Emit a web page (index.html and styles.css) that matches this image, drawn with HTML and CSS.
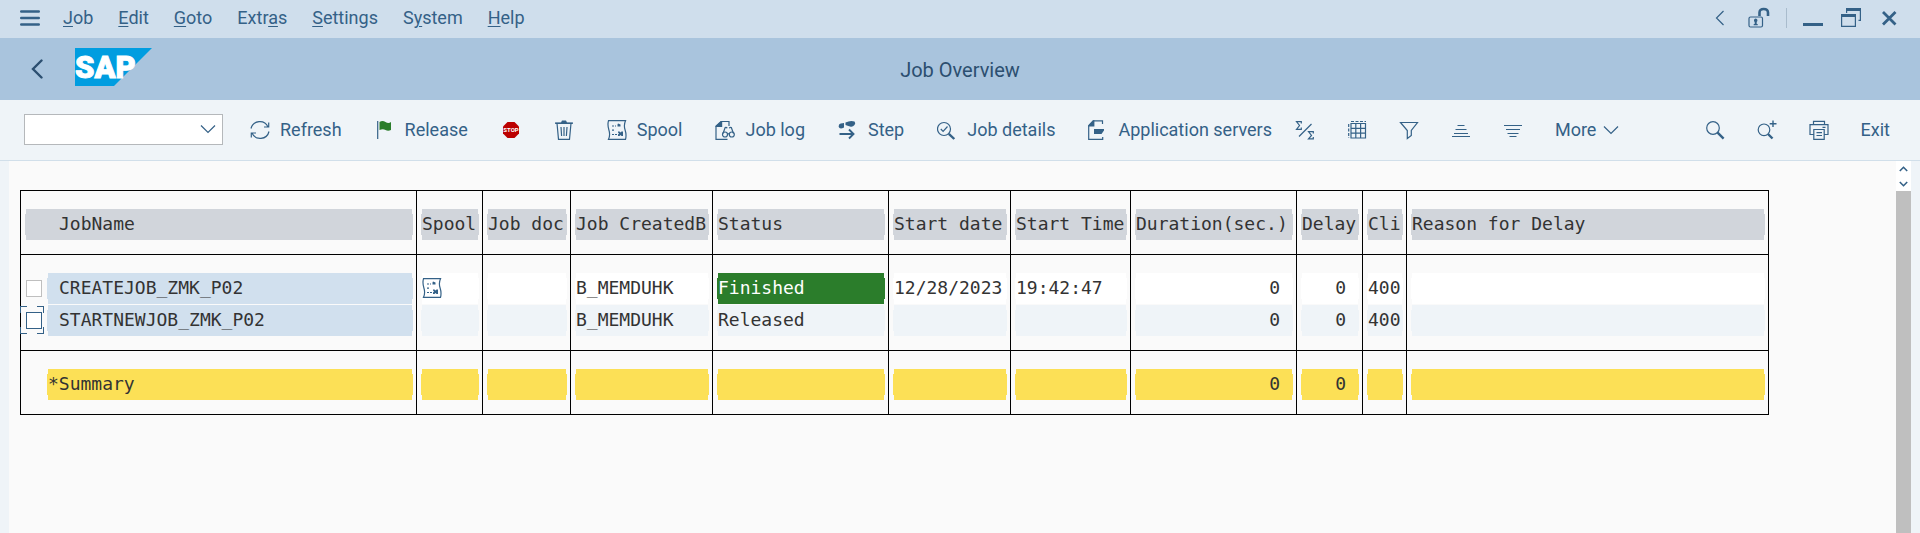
FILE: index.html
```html
<!DOCTYPE html>
<html lang="en">
<head>
<meta charset="utf-8">
<meta name="viewport" content="width=device-width, initial-scale=1">
<title>Job Overview</title>
<link rel="stylesheet" href="styles.css">
</head>
<body>
<svg class="defs" width="0" height="0" aria-hidden="true">
  <symbol id="spool" viewBox="0 0 20 20">
    <path class="line" d="M1.5.7h17q-2 4.5-.4 9.3t.4 9.3h-17q2-4.500.4-9.300T1.500.7z"/>
    <path class="line" stroke-dasharray="2 1" d="M5 6h4M5 14.500h5M5 10.200h2"/>
    <path class="fill" d="M11 3.500l2.500 1v2h-3v-2zM11 11.500h1.500l1 1 1-1H16v4.500h-1.500l-1-1-1 1H11v-1.500l1-1-1-1z"/>
  </symbol>
</svg>

<nav class="menubar" aria-label="Menu">
  <button class="plain" aria-label="Menu"><svg width="20" height="20" viewBox="0 0 20 20"><path d="M1.200 3.500h17.600M1.200 10h17.600M1.200 16.500h17.600" fill="none" stroke="currentColor" stroke-width="2.400" stroke-linecap="round"/></svg></button>
  <div class="menus">
    <a href="#"><u>J</u>ob</a><a href="#"><u>E</u>dit</a><a href="#"><u>G</u>oto</a><a href="#">Extr<u>a</u>s</a><a href="#"><u>S</u>ettings</a><a href="#">S<u>y</u>stem</a><a href="#"><u>H</u>elp</a>
  </div>
  <div class="window-tools">
    <button class="plain" aria-label="Previous"><svg width="10" height="20" viewBox="0 0 10 20"><path class="line" d="M8.500 3 1.500 10l7 7"/></svg></button>
    <button class="plain lock" aria-label="Unlock"><svg width="22" height="22" viewBox="0 0 22 22"><rect class="line" x="1" y="10" width="13.500" height="10" rx="1.500"/><path d="M11.500 9V5.500q0-3.500 4.200-3.500T20 5.500V9" fill="none" stroke="currentColor" stroke-width="2.600"/><path class="fill" d="M7.700 11.500a1.900 1.900 0 0 1 1 3.400V17h1v1.300h-4V17h1v-2.100a1.900 1.900 0 0 1 1-3.400z"/></svg></button>
    <span class="divider"></span>
    <button class="plain" aria-label="Minimize"><svg width="20" height="20" viewBox="0 0 20 20"><path class="fill" d="M0 15h20v3H0z"/></svg></button>
    <button class="plain" aria-label="Restore"><svg width="20" height="20" viewBox="0 0 20 20"><path class="fill" d="M5 0h15v13h-2.500v-1.200h1.300V3H6.200v2H5zM0 6h15v13H0zm1.200 3v8.800h12.600V9z" fill-rule="evenodd"/></svg></button>
    <button class="plain" aria-label="Close"><svg width="20" height="20" viewBox="0 0 20 20"><path d="M4 4l12.500 12.500M16.500 4 4 16.500" fill="none" stroke="currentColor" stroke-width="2.800"/></svg></button>
  </div>
</nav>

<header class="titlebar">
  <div class="brand">
    <button class="plain" aria-label="Back"><svg width="12" height="20" viewBox="0 0 12 20"><path d="M10.500 1.500 2 10l8.500 8.500" fill="none" stroke="currentColor" stroke-width="2.400" stroke-linecap="round"/></svg></button>
    <svg class="logo" width="77" height="38" viewBox="0 0 77 38" role="img" aria-label="SAP"><path fill="#009de0" d="M0 0h77L39 38H0z"/><text class="logo-text" x="0" y="30">SAP</text></svg>
  </div>
  <h1>Job Overview</h1>
</header>

<div class="toolbar" role="toolbar" aria-label="Job actions">
  <div class="command">
    <select aria-label="Command"><option></option></select>
    <svg width="16" height="10" viewBox="0 0 16 10"><path class="line" d="M1 1.500l7 7 7-7"/></svg>
  </div>
  <div class="actions">
    <button><svg width="20" height="20" viewBox="0 0 20 20"><path class="line" d="M1 8.500A9 9 0 0 1 18 7M14 7h4.700V2.500M19 11.500A9 9 0 0 1 2 13M6 13H1.300v4.500"/></svg>Refresh</button>
    <button><svg width="20" height="20" viewBox="0 0 20 20"><path class="line" d="M2.700 1v18"/><path fill="#2b7d2b" d="M4.500 2q3-2 6 0t5.500 0v8q-3 1.500-5.500 0t-6 0z"/></svg>Release</button>
    <button aria-label="Stop"><svg width="20" height="20" viewBox="0 0 20 20"><path fill="#b00" d="M6.500 2h7L18 6.500v7L13.500 18h-7L2 13.500v-7z"/><text class="stop-text" x="10" y="12">STOP</text></svg></button>
    <button aria-label="Delete"><svg width="20" height="20" viewBox="0 0 20 20"><path class="line" d="M1.500 3.300h17M3 3.300l1.500 16h11l1.500-16M7 7l.6 9M10 7v9M13 7l-.6 9"/><path class="fill" d="M1 2.500h6L8 .5h4l1 2h6v1.300H1z"/></svg></button>
    <button><svg width="20" height="20"><use href="#spool"/></svg>Spool</button>
    <button><svg width="20" height="20" viewBox="0 0 20 20"><path class="line" d="M12.500 19.300H1V6.500L6.500 1.500H14V6"/><path class="fill" d="M.5 7V5.700L5.700.9h1.500V7z"/><path class="line" d="M8 13.500l2.200-6q1.300-.6 2 .8M18.500 13.500l-2.200-6q-1.300-.6-2 .8"/><circle class="line" cx="10" cy="14.500" r="2.500"/><circle class="line" cx="16.800" cy="14.500" r="2.500"/><path class="line" d="M12.500 13.800h1.800"/></svg>Job log</button>
    <button><svg width="20" height="20" viewBox="0 0 20 20"><path class="fill" d="M7.500 2.500q5-2.500 9-1 1.500 1.500 0 3.500-2 2.500-4.500 1.500T7.500 5zM6 3v4.500q-3 1.500-4.500.5T1 4.800Q2 3 6 3z"/><path d="M1.500 14h14M11 9.500l4.500 4.500L11 18.500" fill="none" stroke="currentColor" stroke-width="1.900"/></svg>Step</button>
    <button><svg width="20" height="20" viewBox="0 0 20 20"><circle class="line" cx="7" cy="9" r="6.500"/><path class="line" d="M3.800 9l2.300 2.300L10.500 6.500"/><path d="M11.800 13.800l5.500 5.200" stroke="currentColor" stroke-width="2.400"/></svg>Job details</button>
    <button><svg width="20" height="20" viewBox="0 0 20 20"><path class="line" d="M14.500 4V.8H5.500L.7 6v13.300h14V17"/><path class="fill" d="M.2 6.500V5.300L4.900.3h1.500v6.200zM6 9h10v1.500L13.500 14H6z"/></svg>Application servers</button>
  </div>
  <div class="view-actions">
    <button aria-label="Subtotal"><svg width="20" height="20" viewBox="0 0 20 20"><path class="line" d="M6.300 3.500V1.600H1.500L4.500 5.500l-3 3.900h4.800V7.500M18.300 13.500v-1.900h-4.800l3 3.900-3 3.400h4.800V17M16.500 4 4 16.500"/></svg></button>
    <button aria-label="Layout"><svg width="20" height="20" viewBox="0 0 20 20"><path class="line" d="M4 3.500h14.500v14.500H4zM4 8.300h14.500M4 13.100h14.500M8.800 3.500V18M13.600 3.500V18"/><path class="line" stroke-dasharray="3 1.500" d="M4 1.500h15M1.700 4v14"/></svg></button>
    <button aria-label="Filter"><svg width="20" height="20" viewBox="0 0 20 20"><path class="line" d="M1.500 2.500h17l-6.200 8v5l-4 3v-8z"/></svg></button>
    <button aria-label="Sort ascending"><svg width="20" height="20" viewBox="0 0 20 20"><path class="line" d="M6.500 5.500h7M4.500 9.500h11M3 13.500h14M1 16.500h18"/></svg></button>
    <button aria-label="Sort descending"><svg width="20" height="20" viewBox="0 0 20 20"><path class="line" d="M1 5.500h18M3 9.500h14M4.500 13.500h11M6.500 16.500h7"/></svg></button>
    <button class="more">More<svg width="16" height="10" viewBox="0 0 16 10"><path class="line" d="M1 1.500l7 7 7-7"/></svg></button>
  </div>
  <div class="toolbar-end">
    <button aria-label="Find"><svg width="20" height="20" viewBox="0 0 20 20"><circle class="line" cx="8" cy="8" r="6.300"/><path d="M12.600 12.600l6 6" stroke="currentColor" stroke-width="2.400"/></svg></button>
    <button aria-label="Find next"><svg width="20" height="20" viewBox="0 0 20 20"><circle class="line" cx="7" cy="9.800" r="5.800"/><path d="M11 14l4.500 4.500" stroke="currentColor" stroke-width="2.400"/><path d="M16 .5v6.500M12.700 3.800h6.800" stroke="currentColor" stroke-width="1.400"/></svg></button>
    <button aria-label="Print"><svg width="20" height="20" viewBox="0 0 20 20"><path class="line" d="M4.500 4.500V1.300h11v3.200M4.500 14.500H1V4.700h18v9.800h-3.500M4.800 9.500h10.400v9.800H4.800zM7.500 12.700h5.500M7.500 15.500h5.500M13.500 7.300h3"/></svg></button>
    <button>Exit</button>
  </div>
</div>

<main class="workspace">
  <div class="list-area">
    <table>
      <colgroup><col class="w-name"><col class="w-short"><col class="w-doc"><col class="w-creator"><col class="w-status"><col class="w-date"><col class="w-time"><col class="w-duration"><col class="w-short"><col class="w-client"><col class="w-reason"></colgroup>
      <thead>
        <tr><th><span class="field indent">JobName</span></th><th><span class="field">Spool</span></th><th><span class="field">Job doc</span></th><th><span class="field">Job CreatedB</span></th><th><span class="field">Status</span></th><th><span class="field">Start date</span></th><th><span class="field">Start Time</span></th><th><span class="field">Duration(sec.)</span></th><th><span class="field">Delay</span></th><th><span class="field">Cli</span></th><th><span class="field">Reason for Delay</span></th></tr>
      </thead>
      <tbody class="jobs">
        <tr class="job">
          <td><label class="pick"><span class="tick"><input type="checkbox"></span><span class="field key">CREATEJOB_ZMK_P02</span></label></td>
          <td><span class="field"><svg width="20" height="20" role="img" aria-label="Spool list"><use href="#spool"/></svg></span></td>
          <td><span class="field"></span></td><td><span class="field">B_MEMDUHK</span></td><td><span class="field finished">Finished</span></td><td><span class="field">12/28/2023</span></td><td><span class="field">19:42:47</span></td><td><span class="field num">0</span></td><td><span class="field num">0</span></td><td><span class="field">400</span></td><td><span class="field"></span></td>
        </tr>
        <tr class="job alt">
          <td><label class="pick"><span class="tick focused"><input type="checkbox"></span><span class="field key">STARTNEWJOB_ZMK_P02</span></label></td>
          <td><span class="field"></span></td><td><span class="field"></span></td><td><span class="field">B_MEMDUHK</span></td><td><span class="field">Released</span></td><td><span class="field"></span></td><td><span class="field"></span></td><td><span class="field num">0</span></td><td><span class="field num">0</span></td><td><span class="field">400</span></td><td><span class="field"></span></td>
        </tr>
      </tbody>
      <tfoot>
        <tr><td><div class="pick"><span class="tick"></span><span class="field">*Summary</span></div></td><td><span class="field"></span></td><td><span class="field"></span></td><td><span class="field"></span></td><td><span class="field"></span></td><td><span class="field"></span></td><td><span class="field"></span></td><td><span class="field num">0</span></td><td><span class="field num">0</span></td><td><span class="field"></span></td><td><span class="field"></span></td></tr>
      </tfoot>
    </table>
  </div>
  <div class="scrollbar">
    <button class="plain" aria-label="Scroll up"><svg width="9" height="6" viewBox="0 0 9 6"><path d="M.8 5l3.700-3.700L8.200 5" fill="none" stroke="currentColor" stroke-width="1.600"/></svg></button>
    <button class="plain" aria-label="Scroll down"><svg width="9" height="6" viewBox="0 0 9 6"><path d="M.8 1l3.700 3.700L8.200 1" fill="none" stroke="currentColor" stroke-width="1.600"/></svg></button>
    <div class="thumb"></div>
  </div>
</main>
</body>
</html>
```
FILE: styles.css
```css
* { box-sizing: border-box; }

body {
  margin: 0;
  min-height: 100vh;
  display: flex;
  flex-direction: column;
  background: #eff4f8;
  color: #346187;
  font: 18px/24px Roboto, "Liberation Sans", sans-serif;
}

.defs { position: absolute; }
svg { flex: none; display: block; }
.line { fill: none; stroke: currentColor; stroke-width: 1.2; }
.fill { fill: currentColor; }

button {
  display: flex;
  align-items: center;
  gap: 10px;
  padding: 0;
  border: 0;
  background: none;
  color: inherit;
  font: inherit;
  white-space: nowrap;
}

.menubar {
  display: flex;
  align-items: center;
  height: 38px;
  padding: 0 21px 2px 20px;
  background: #cfdeec;
}
.menus { display: flex; gap: 25px; margin-left: 23px; }
.menus a { color: inherit; text-decoration: none; }
.menus u { text-underline-offset: 2px; text-decoration-thickness: 1px; }

.window-tools { display: flex; align-items: center; gap: 18px; margin-left: auto; }
.window-tools .lock { margin-left: 5px; }
.divider { width: 1px; height: 20px; background: #a9bccd; margin: 0 -2px; }

.titlebar {
  display: grid;
  grid-template-columns: 1fr auto 1fr;
  align-items: center;
  height: 62px;
  padding: 0 31px;
  background: #a9c4dd;
  color: #2c4f70;
}
.brand { display: flex; align-items: center; gap: 32px; }
.logo { margin-bottom: 4px; }
.titlebar h1 { margin: 0; padding-top: 2px; font-size: 20px; font-weight: 400; }
.logo-text { font: 900 31px Roboto, sans-serif; fill: #fff; stroke: #fff; stroke-width: 1; }
.stop-text { font: 700 6px Roboto, sans-serif; fill: #fff; text-anchor: middle; }

.toolbar {
  display: flex;
  align-items: center;
  gap: 27px;
  height: 61px;
  padding: 0 30px 0 24px;
  border-bottom: 1px solid #d1dfea;
}
.command { display: grid; align-items: center; width: 199px; padding-bottom: 2px; }
.command > * { grid-area: 1 / 1; }
.command svg { justify-self: end; margin-right: 7px; pointer-events: none; }
.command select {
  appearance: none;
  width: 100%;
  height: 31px;
  border: 1px solid #b5b8bb;
  background: #fff;
  font: inherit;
}
.actions { display: flex; gap: 33px; }
.view-actions { display: flex; gap: 32px; margin-left: -4px; }
.toolbar .more { gap: 7px; }
.toolbar-end { display: flex; gap: 32px; margin-left: auto; }

.workspace { flex: 1; display: flex; padding: 0 9px; }
.list-area { flex: 1; padding: 29px 0 29px 11px; background: #fafafa; overflow: hidden; }
.scrollbar { display: flex; flex-direction: column; width: 15px; background: #fff; }
.scrollbar button { justify-content: center; height: 15px; }
.thumb { flex: 1; background: #bfbfbf; }

table {
  table-layout: fixed;
  width: 1749px;
  border-collapse: separate;
  border-spacing: 0;
  border: solid #000;
  border-width: 1px 0 0 1px;
  color: #333;
  font: 18px/29px "DejaVu Sans Mono", "Liberation Mono", monospace;
}
.w-name { width: 396px; }
.w-short { width: 66px; }
.w-doc { width: 88px; }
.w-creator { width: 142px; }
.w-status { width: 176px; }
.w-date { width: 122px; }
.w-time { width: 120px; }
.w-duration { width: 166px; }
.w-client { width: 44px; }
.w-reason { width: 362px; }

th, td {
  padding: 18px 4px 14px 5px;
  border-right: 1px solid #000;
  border-bottom: 1px solid #000;
  font-weight: 400;
  text-align: left;
}
.jobs tr:first-child td { padding-bottom: 1px; border-bottom: 0; }
.jobs tr:last-child td { padding-top: 0; }

.field {
  position: relative;
  z-index: 0;
  display: flex;
  align-items: center;
  flex: 1;
  height: 31px;
  padding-bottom: 2px;
  background: var(--fill);
  white-space: nowrap;
}
.field::before {
  content: "";
  position: absolute;
  z-index: -1;
  inset: 5px -1px;
  background: var(--fill);
}
thead { --fill: #d1d5db; }
.job { --fill: #fff; }
.job.alt { --fill: #eff4f8; }
tfoot { --fill: #fce056; }
.key { --fill: #d1e0ee; padding-left: 11px; }
.finished { --fill: #2b7d2b; color: #fff; }
.indent { padding-left: 33px; }
.num { justify-content: flex-end; padding-right: 12px; }
.field svg { color: #346187; }

.pick { display: flex; }
.tick { position: relative; display: flex; align-items: center; width: 22px; padding-bottom: 1px; }
.tick input {
  appearance: none;
  width: 16px;
  height: 17px;
  margin: 0;
  border: 1px solid #bfbfbf;
  background: #fff;
}
.focused input { border-color: #346187; }
.focused::before {
  --v: linear-gradient(#346187, #346187);
  content: "";
  position: absolute;
  inset: 1px 4px 2px -6px;
  background:
    var(--v) 0 0 / 7px 1px, var(--v) 0 0 / 1px 7px,
    var(--v) 100% 0 / 7px 1px, var(--v) 100% 0 / 1px 7px,
    var(--v) 0 100% / 7px 1px, var(--v) 0 100% / 1px 7px,
    var(--v) 100% 100% / 7px 1px, var(--v) 100% 100% / 1px 7px;
  background-repeat: no-repeat;
}
```
